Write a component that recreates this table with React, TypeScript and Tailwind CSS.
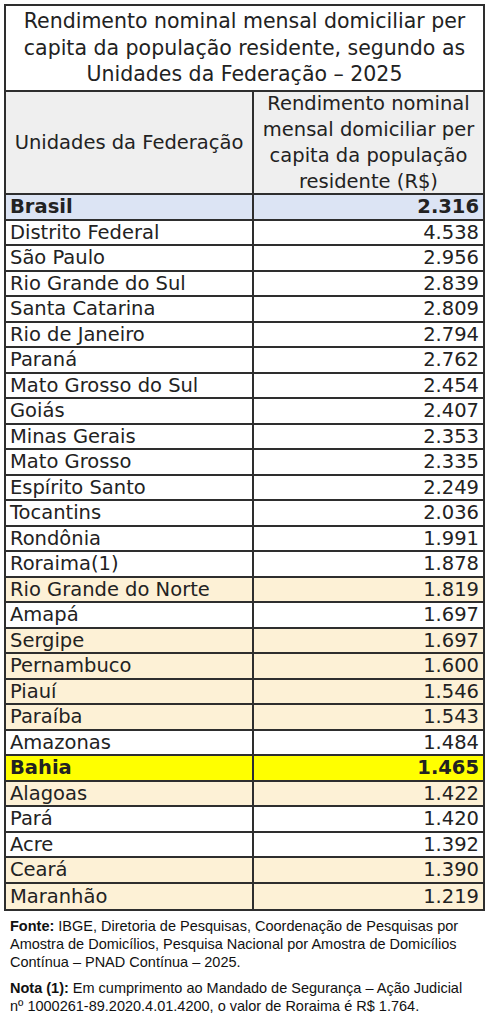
const ROWS: { uf: string; value: string; tone?: "br" | "ne" | "ba" }[] = [
  { uf: "Brasil", value: "2.316", tone: "br" },
  { uf: "Distrito Federal", value: "4.538" },
  { uf: "São Paulo", value: "2.956" },
  { uf: "Rio Grande do Sul", value: "2.839" },
  { uf: "Santa Catarina", value: "2.809" },
  { uf: "Rio de Janeiro", value: "2.794" },
  { uf: "Paraná", value: "2.762" },
  { uf: "Mato Grosso do Sul", value: "2.454" },
  { uf: "Goiás", value: "2.407" },
  { uf: "Minas Gerais", value: "2.353" },
  { uf: "Mato Grosso", value: "2.335" },
  { uf: "Espírito Santo", value: "2.249" },
  { uf: "Tocantins", value: "2.036" },
  { uf: "Rondônia", value: "1.991" },
  { uf: "Roraima(1)", value: "1.878" },
  { uf: "Rio Grande do Norte", value: "1.819", tone: "ne" },
  { uf: "Amapá", value: "1.697" },
  { uf: "Sergipe", value: "1.697", tone: "ne" },
  { uf: "Pernambuco", value: "1.600", tone: "ne" },
  { uf: "Piauí", value: "1.546", tone: "ne" },
  { uf: "Paraíba", value: "1.543", tone: "ne" },
  { uf: "Amazonas", value: "1.484" },
  { uf: "Bahia", value: "1.465", tone: "ba" },
  { uf: "Alagoas", value: "1.422", tone: "ne" },
  { uf: "Pará", value: "1.420" },
  { uf: "Acre", value: "1.392" },
  { uf: "Ceará", value: "1.390", tone: "ne" },
  { uf: "Maranhão", value: "1.219", tone: "ne" },
];

const toneBg = (tone?: string) =>
  tone === "br" ? "bg-[#dce4f4]" : tone === "ne" ? "bg-[#fdf1d6]" : tone === "ba" ? "bg-[#ffff00]" : "bg-white";

export default function App() {
  return (
    <div className="w-[489px] h-[1024px] bg-white px-[4px] pt-[4px] text-[#222] font-['DejaVu_Sans',sans-serif]">
      {/* ── Table ── */}
      <div className="w-[481px] border-2 border-[#2e2e2e]">
        <div className="flex h-[86px] flex-col items-center justify-center border-b-2 border-[#2e2e2e] text-center text-[20.5px] leading-[26.5px] whitespace-nowrap">
          <p>Rendimento nominal mensal domiciliar per</p>
          <p>capita da população residente, segundo as</p>
          <p>Unidades da Federação – 2025</p>
        </div>

        <div className="flex h-[103px] border-b-2 border-[#2e2e2e] bg-[#efefef] text-[19.5px] whitespace-nowrap">
          <div className="flex w-[248px] items-center justify-center border-r-2 border-[#2e2e2e]">
            Unidades da Federação
          </div>
          <div className="flex flex-1 flex-col items-center justify-center text-center leading-[26px]">
            <p>Rendimento nominal</p>
            <p>mensal domiciliar per</p>
            <p>capita da população</p>
            <p>residente (R$)</p>
          </div>
        </div>

        {ROWS.map((r, i) => (
          <div
            key={r.uf}
            className={`flex h-[25.5px] text-[19.5px] leading-none whitespace-nowrap ${toneBg(r.tone)} ${i < ROWS.length - 1 ? "border-b-2 border-[#2e2e2e]" : ""} ${r.tone === "br" || r.tone === "ba" ? "font-bold" : ""}`}
          >
            <div className="flex w-[248px] items-center border-r-2 border-[#2e2e2e] pl-[4px]">{r.uf}</div>
            <div className="flex flex-1 items-center justify-end pr-[4px]">{r.value}</div>
          </div>
        ))}
      </div>

      {/* ── Notes ── */}
      <div className="mt-[6px] pl-[6px] text-[14.5px] leading-[18px] text-[#111] whitespace-nowrap font-['Liberation_Sans',sans-serif]">
        <p>
          <b>Fonte:</b> IBGE, Diretoria de Pesquisas, Coordenação de Pesquisas por
          <br />
          Amostra de Domicílios, Pesquisa Nacional por Amostra de Domicílios
          <br />
          Contínua – PNAD Contínua – 2025.
        </p>
        <p className="mt-[8px]">
          <b>Nota (1):</b> Em cumprimento ao Mandado de Segurança – Ação Judicial
          <br />
          nº 1000261-89.2020.4.01.4200, o valor de Roraima é R$ 1.764.
        </p>
      </div>
    </div>
  );
}
